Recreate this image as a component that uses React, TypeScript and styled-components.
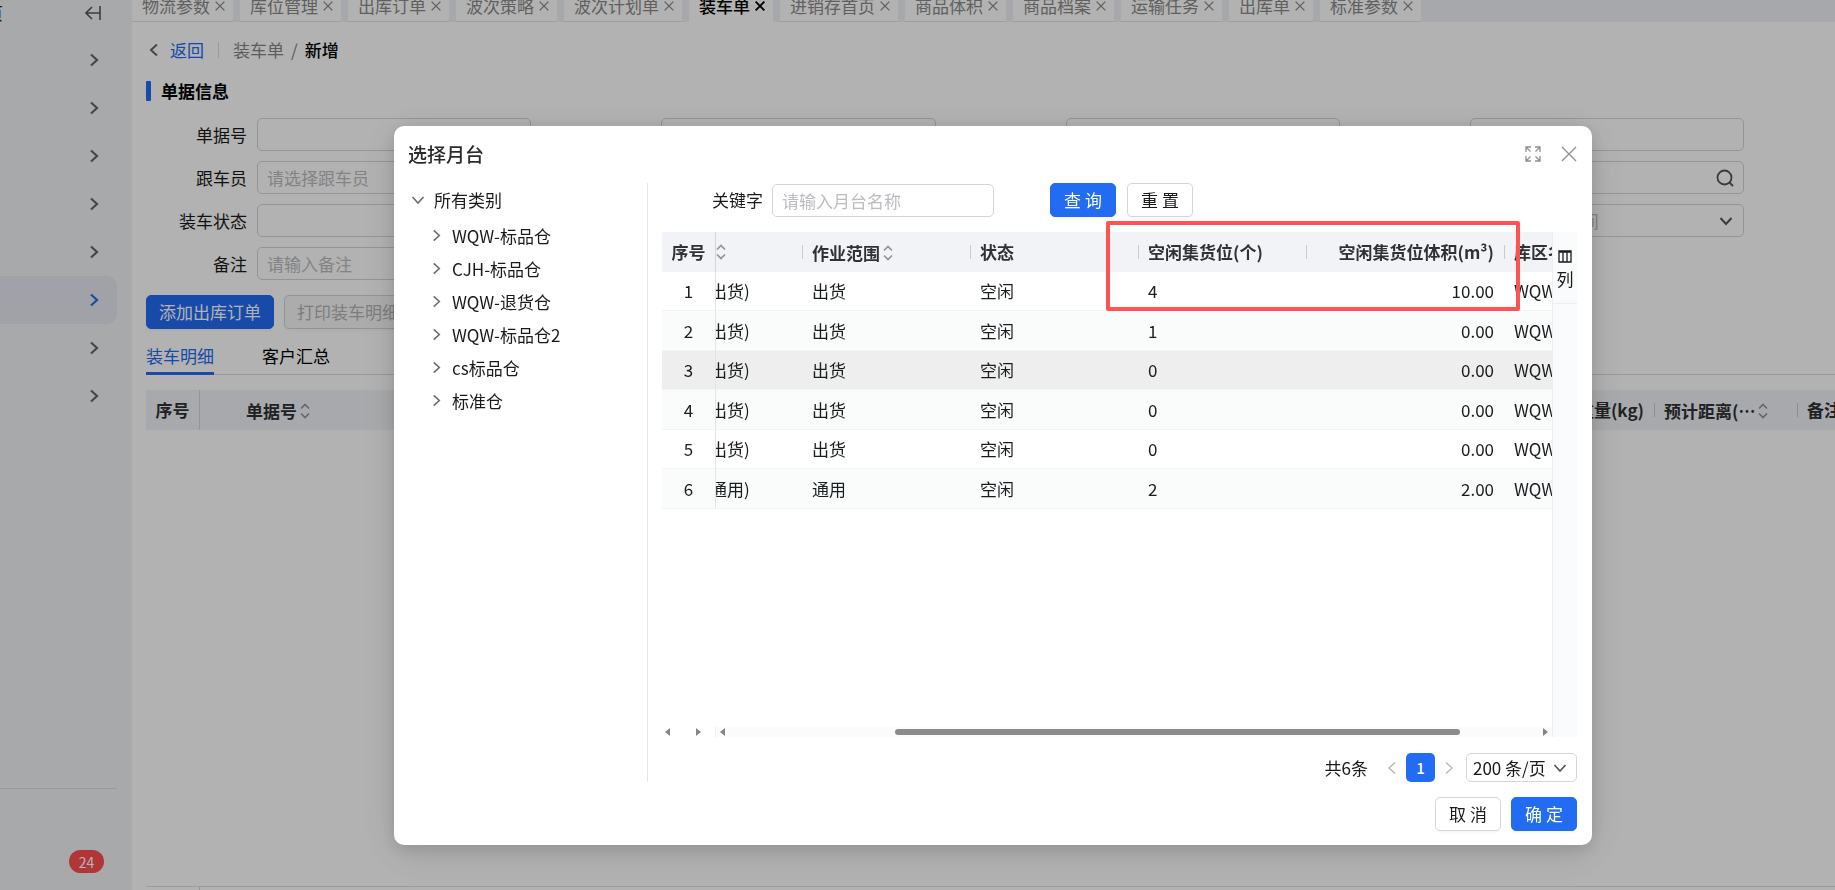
import React from "react";
import styled, { createGlobalStyle, css } from "styled-components";

const blue = "#226bf3";

const GlobalStyle = createGlobalStyle`
  *, *::before, *::after { box-sizing: border-box; }
  body {
    margin: 0;
    overflow: hidden;
    background: #fff;
    color: #1a1a1a;
    font: 17px/24px "Noto Sans CJK SC", "Noto Sans", sans-serif;
  }
  button, input, select { font: inherit; color: inherit; margin: 0; }
  button { cursor: pointer; }
  ul { list-style: none; margin: 0; padding: 0; }
  h1, h2 { margin: 0; }
`;

/* ---------- icons ---------- */

type Dir = "left" | "right" | "down";
const chevronPaths: Record<Dir, string> = {
  right: "M5 2.5 11 8l-6 5.5",
  left: "M11 2.5 5 8l6 5.5",
  down: "M2.5 5 8 11l5.5-6",
};

const Icon = styled.svg`
  display: block;
  flex: none;
  fill: none;
  stroke: currentColor;
`;

const Chevron = ({ dir, size = 16, weight = 1.7 }: { dir: Dir; size?: number; weight?: number }) => (
  <Icon width={size} height={size} viewBox="0 0 16 16" strokeWidth={weight} aria-hidden>
    <path d={chevronPaths[dir]} />
  </Icon>
);

const SortIcon = styled(Icon)`
  color: #8f949b;
`;

const Sort = () => (
  <SortIcon width="10" height="16" viewBox="0 0 10 16" strokeWidth="1.7" aria-hidden>
    <path d="M1 5.5 5 1.5l4 4M1 10.5l4 4 4-4" />
  </SortIcon>
);

const Cross = ({ size, weight }: { size: number; weight: number }) => (
  <Icon width={size} height={size} viewBox="0 0 16 16" strokeWidth={weight} aria-hidden>
    <path d="M1 1l14 14M15 1 1 15" />
  </Icon>
);

/* ---------- page ---------- */

const Page = styled.div`
  display: flex;
  min-height: 100vh;
`;

const Sidebar = styled.aside`
  display: flex;
  flex-direction: column;
  flex: none;
  width: 132px;
  padding-right: 15px;
  background: #f0f2f5;
`;

const SidebarHead = styled.div`
  display: flex;
  justify-content: space-between;
  align-items: center;
  height: 36px;
  padding: 0 16px 10px 0;
`;

const SidebarTitle = styled.span`
  width: 3px;
  display: flex;
  justify-content: flex-end;
  overflow: hidden;
  white-space: nowrap;
`;

const IconButton = styled.button`
  display: flex;
  align-items: center;
  justify-content: center;
  padding: 0;
  border: 0;
  background: none;
  color: inherit;
`;

const MenuButton = styled(IconButton)<{ $active?: boolean }>`
  width: 100%;
  height: 48px;
  padding-right: 15px;
  justify-content: flex-end;
  border-radius: 0 10px 10px 0;
  color: ${(p) => (p.$active ? blue : "#62666b")};
  background: ${(p) => (p.$active ? "#e6e8f1" : "none")};
`;

const SidebarFoot = styled.div`
  display: flex;
  justify-content: flex-end;
  align-items: flex-start;
  height: 102px;
  margin-top: auto;
  padding: 61px 13px 0 0;
  border-top: 1px solid #d7dadd;
`;

const Badge = styled.span`
  width: 35px;
  height: 23px;
  border-radius: 12px;
  background: #ff4d4f;
  color: #fff;
  font-size: 14px;
  text-align: center;
`;

const Main = styled.main`
  display: flex;
  flex-direction: column;
  flex: 1;
  min-width: 0;
`;

const TabStrip = styled.nav`
  display: flex;
  align-items: flex-end;
  gap: 7px;
  height: 22px;
  overflow: hidden;
  background: #eef1f5;
`;

const PageTab = styled.div<{ $active?: boolean }>`
  display: flex;
  align-items: center;
  flex: none;
  gap: 5px;
  height: 32px;
  padding: 0 8px 0 10px;
  background: #fff;
  color: #8a8a8a;
  box-shadow: inset 0 -1px #dfe1e4;
  ${(p) =>
    p.$active &&
    css`
      color: #000;
      font-weight: 500;
      box-shadow: none;
    `}
`;

const Content = styled.div`
  display: flex;
  flex-direction: column;
  flex: 1;
  padding: 16px 0 0 14px;
`;

const Breadcrumb = styled.nav`
  display: flex;
  align-items: center;
  color: #858585;
`;

const BackLink = styled.a`
  display: flex;
  align-items: center;
  gap: 8px;
  padding-right: 14px;
  border-right: 1px solid #ddd;
  margin-right: 14px;
  line-height: 16px;
  color: ${blue};
  text-decoration: none;
  svg { color: #666; }
`;

const Slash = styled.span`
  margin: 0 7px;
`;

const Current = styled.span`
  color: #000;
  font-weight: 500;
`;

const SectionTitle = styled.h2`
  display: flex;
  align-items: center;
  gap: 10px;
  margin-top: 17px;
  font-size: 17px;
  line-height: 24px;
  font-weight: 700;
  color: #000;
  &::before {
    content: "";
    width: 5px;
    height: 20px;
    border-radius: 1px;
    background: ${blue};
  }
`;

const FormGrid = styled.form`
  display: grid;
  grid-template-columns: repeat(4, minmax(0, 1fr));
  gap: 10px 19px;
  margin: 15px 91px 0 0;
`;

const Field = styled.label`
  display: grid;
  grid-template-columns: 101px 1fr;
  gap: 10px;
  align-items: center;
`;

const FieldLabel = styled.span`
  text-align: right;
`;

const Control = styled.span`
  display: flex;
  align-items: center;
  height: 33px;
  padding: 0 9px;
  border: 1px solid #d3d5d8;
  border-radius: 5px;
  color: #555;
`;

const TextInput = styled.input`
  flex: 1;
  width: 100%;
  min-width: 0;
  height: 100%;
  padding: 0;
  border: 0;
  outline: 0;
  background: none;
  &::placeholder { color: #bbbcbf; opacity: 1; }
`;

const PlainSelect = styled.select`
  flex: 1;
  min-width: 0;
  height: 100%;
  padding: 0;
  border: 0;
  outline: 0;
  appearance: none;
  background: none;
  color: #bbbcbf;
`;

const Button = styled.button<{ $primary?: boolean }>`
  flex: none;
  min-width: 66px;
  height: 34px;
  padding: 0 12px;
  border: 1px solid ${(p) => (p.$primary ? blue : "#d3d5d8")};
  border-radius: 5px;
  background: ${(p) => (p.$primary ? blue : "#fff")};
  color: ${(p) => (p.$primary ? "#fff" : "#1a1a1a")};
  line-height: 24px;
  white-space: nowrap;
  box-shadow: 0 2px 2px rgba(0, 0, 0, 0.03);
  &:disabled { background: #f7f7f7; color: #b3b3b3; }
`;

const Actions = styled.div`
  display: flex;
  gap: 10px;
  margin-top: 15px;
`;

const DetailTabs = styled.div`
  display: flex;
  gap: 48px;
  margin-top: 16px;
  border-bottom: 1px solid #d8dadd;
`;

const DetailTab = styled.button<{ $active?: boolean }>`
  height: 30px;
  padding: 0 0 6px;
  margin-bottom: -1px;
  border: 0;
  border-bottom: 3px solid ${(p) => (p.$active ? blue : "transparent")};
  background: none;
  color: ${(p) => (p.$active ? blue : "#000")};
  line-height: 22px;
`;

const Table = styled.table`
  width: 100%;
  table-layout: fixed;
  border-collapse: separate;
  border-spacing: 0;
`;

const HeadCell = styled.th<{ $align?: string; $divider?: boolean; $pinned?: boolean; $cut?: boolean }>`
  height: 40px;
  padding: 0 ${(p) => (p.$pinned || p.$cut ? 0 : 10)}px;
  overflow: hidden;
  white-space: nowrap;
  text-align: ${(p) => p.$align || "left"};
  font-weight: 700;
  color: #303133;
  background: #f1f3f6;
  ${(p) => p.$pinned && "border-right: 1px solid #d3d6dc;"}
  ${(p) =>
    p.$divider &&
    css`
      background: linear-gradient(#c6cad4, #c6cad4) left center / 1px 14px no-repeat #f1f3f6;
    `}
`;

const HeadLabel = styled.span`
  display: inline-flex;
  align-items: center;
  gap: 3px;
  vertical-align: middle;
`;

const OrderTable = styled(Table)`
  margin-top: 15px;
`;

const OrderHeadCell = styled(HeadCell)<{ $indent?: boolean }>`
  ${(p) => p.$indent && "padding-left: 46px;"}
`;

const Summary = styled.div`
  height: 4px;
  margin-top: auto;
  border-top: 1px solid #dcdee0;
  &::before {
    content: "";
    display: block;
    width: 54px;
    height: 3px;
    border-right: 1px solid #d3d6dc;
  }
`;

/* ---------- dialog ---------- */

const Mask = styled.div`
  position: fixed;
  inset: 0;
  display: flex;
  justify-content: center;
  align-items: flex-start;
  padding: 126px 0 0 151px;
  background: rgba(0, 0, 0, 0.3);
`;

const Dialog = styled.section`
  width: min(1198px, 100%);
  padding: 14px 15px 14px 14px;
  border-radius: 10px;
  background: #fff;
  box-shadow: 0 8px 40px rgba(0, 0, 0, 0.12), 0 4px 16px rgba(0, 0, 0, 0.12);
`;

const DialogHead = styled.header`
  display: flex;
  align-items: center;
  gap: 20px;
  height: 28px;
`;

const DialogTitle = styled.h1`
  flex: 1;
  font-size: 19px;
  line-height: 28px;
  font-weight: 500;
  color: #2b2b2b;
`;

const HeadButton = styled(IconButton)`
  width: 16px;
  height: 16px;
  color: #8f8f8f;
`;

const DialogBody = styled.div`
  display: flex;
  margin-top: 15px;
`;

const Tree = styled.ul`
  flex: none;
  width: 240px;
  padding-left: 2px;
  border-right: 1px solid #e4e5e7;
`;

const TreeBranch = styled.ul`
  margin: 3px 0 0 19px;
`;

const TreeNode = styled.button`
  display: flex;
  align-items: center;
  gap: 8px;
  height: 33px;
  padding: 0;
  border: 0;
  background: none;
  color: #1a1a1a;
  svg { color: #6d6d6d; }
`;

const Panel = styled.div`
  flex: 1;
  min-width: 0;
  padding-left: 14px;
`;

const SearchBar = styled.form`
  display: flex;
  align-items: center;
  gap: 11px;
  padding-left: 50px;
`;

const KeywordField = styled.label`
  display: flex;
  align-items: center;
  gap: 9px;
  margin-right: 45px;
`;

const KeywordControl = styled(Control)`
  width: 222px;
`;

const GridArea = styled.div`
  position: relative;
  display: flex;
  margin-top: 15px;
`;

const GridMain = styled.div`
  display: flex;
  flex-direction: column;
  flex: 1;
  min-width: 0;
  min-height: 505px;
`;

const BodyRow = styled.tr<{ $hover?: boolean }>`
  height: 39px;
  background: ${(p) => (p.$hover ? "#eee" : "#fff")};
  &:nth-child(even) {
    height: 40px;
    background: #fafcfb;
  }
`;

const Cell = styled.td<{ $align?: string; $pinned?: boolean; $cut?: boolean }>`
  padding: 0 ${(p) => (p.$pinned || p.$cut ? 0 : 10)}px;
  overflow: hidden;
  white-space: nowrap;
  text-align: ${(p) => p.$align || "left"};
  color: #181d1f;
  border-bottom: 1px solid #f3f4f4;
  ${(p) => p.$pinned && "border-right: 1px solid #e2e3e5;"}
  ${(p) => p.$cut && "text-indent: -6px;"}
`;

const ScrollRow = styled.div`
  display: flex;
  height: 10px;
  margin-top: auto;
  color: #858585;
`;

const PinnedScroll = styled.div`
  display: flex;
  align-items: center;
  justify-content: space-between;
  width: 54px;
  padding: 0 14px 0 3px;
  border-right: 1px solid #eee;
`;

const Track = styled.div`
  display: grid;
  grid-template-columns: 8px 169fr 563fr 80fr 8px;
  align-items: center;
  flex: 1;
  padding: 0 4px 0 1px;
  background: #fbfbfb;
`;

const Thumb = styled.span`
  grid-column: 3;
  height: 6px;
  border-radius: 3px;
  background: #8b8b8b;
`;

const Triangle = styled.i<{ $right?: boolean }>`
  justify-self: end;
  width: 0;
  height: 0;
  border: 4px solid transparent;
  ${(p) =>
    p.$right
      ? "border-left: 5px solid #858585; border-right: 0; grid-column: 5;"
      : "border-right: 5px solid #858585; border-left: 0;"}
`;

const SidePanel = styled.div`
  flex: none;
  width: 25px;
  background: #fafbfd;
  border-left: 1px solid #eceef0;
`;

const ColumnsButton = styled(IconButton)`
  flex-direction: column;
  gap: 4px;
  width: 100%;
  height: 72px;
  padding-top: 5px;
  border-bottom: 1px solid #eceef0;
`;

const Highlight = styled.div`
  position: absolute;
  top: -11px;
  left: 444px;
  width: 414px;
  height: 90px;
  border: 4px solid #ff5252;
  border-radius: 2px;
  pointer-events: none;
`;

const Pager = styled.div`
  display: flex;
  align-items: center;
  justify-content: flex-end;
  margin-top: 16px;
`;

const PageArrow = styled(IconButton)`
  width: 14px;
  margin: 0 7px;
  color: #b5b5b5;
`;

const PageNumber = styled(IconButton)`
  width: 29px;
  height: 29px;
  border-radius: 5px;
  background: ${blue};
  color: #fff;
  font-size: 15px;
  font-weight: 500;
`;

const Total = styled.span`
  margin-right: 10px;
`;

const SizeControl = styled(Control)`
  width: 111px;
  height: 29px;
  margin-left: 3px;
  padding: 0 8px 0 6px;
`;

const SizeSelect = styled(PlainSelect)`
  color: #1a1a1a;
`;

const DialogFoot = styled.footer`
  display: flex;
  justify-content: flex-end;
  gap: 10px;
  margin-top: 15px;
`;

/* ---------- data ---------- */

const pageTabs = ["物流参数", "库位管理", "出库订单", "波次策略", "波次计划单", "装车单", "进销存首页", "商品体积", "商品档案", "运输任务", "出库单", "标准参数"];
const warehouses = ["WQW-标品仓", "CJH-标品仓", "WQW-退货仓", "WQW-标品仓2", "cs标品仓", "标准仓"];
const docks = [
  { scope: "出货", slots: 4, volume: "10.00" },
  { scope: "出货", slots: 1, volume: "0.00" },
  { scope: "出货", slots: 0, volume: "0.00" },
  { scope: "出货", slots: 0, volume: "0.00" },
  { scope: "出货", slots: 0, volume: "0.00" },
  { scope: "通用", slots: 2, volume: "2.00" },
];

const FormField = ({ label, placeholder, kind }: { label?: string; placeholder?: string; kind?: "search" | "select" }) => (
  <Field>
    <FieldLabel>{label}</FieldLabel>
    <Control>
      {kind === "select" ? (
        <PlainSelect aria-label={placeholder}>
          <option>{placeholder}</option>
        </PlainSelect>
      ) : (
        <TextInput placeholder={placeholder} aria-label={label} />
      )}
      {kind === "select" && <Chevron dir="down" weight={2} />}
      {kind === "search" && (
        <Icon width="18" height="18" viewBox="0 0 18 18" strokeWidth="1.8" aria-hidden>
          <circle cx="8.5" cy="8.5" r="7" />
          <path d="m13.5 13.5 3.5 3.5" />
        </Icon>
      )}
    </Control>
  </Field>
);

const DockDialog = () => (
  <Dialog role="dialog" aria-modal="true" aria-labelledby="dock-title">
    <DialogHead>
      <DialogTitle id="dock-title">选择月台</DialogTitle>
      <HeadButton aria-label="全屏">
        <Icon width="16" height="16" viewBox="0 0 16 16" strokeWidth="1.3" aria-hidden>
          <path d="M1 6V1h5M1 1l4.5 4.5M10 1h5v5M15 1l-4.5 4.5M15 10v5h-5M15 15l-4.5-4.5M6 15H1v-5M1 15l4.5-4.5" />
        </Icon>
      </HeadButton>
      <HeadButton aria-label="关闭">
        <Cross size={16} weight={1.3} />
      </HeadButton>
    </DialogHead>
    <DialogBody>
      <Tree>
        <li>
          <TreeNode>
            <Chevron dir="down" />
            所有类别
          </TreeNode>
          <TreeBranch>
            {warehouses.map((name) => (
              <li key={name}>
                <TreeNode>
                  <Chevron dir="right" size={15} />
                  {name}
                </TreeNode>
              </li>
            ))}
          </TreeBranch>
        </li>
      </Tree>
      <Panel>
        <SearchBar onSubmit={(e) => e.preventDefault()}>
          <KeywordField>
            关键字
            <KeywordControl>
              <TextInput placeholder="请输入月台名称" />
            </KeywordControl>
          </KeywordField>
          <Button $primary>查 询</Button>
          <Button type="reset">重 置</Button>
        </SearchBar>
        <GridArea>
          <GridMain>
            <Table>
              <colgroup>
                {[54, 86, 168, 168, 168, 198].map((w, i) => (
                  <col key={i} width={w} />
                ))}
                <col />
              </colgroup>
              <thead>
                <tr>
                  <HeadCell $pinned $align="center">序号</HeadCell>
                  <HeadCell $cut><Sort /></HeadCell>
                  <HeadCell $divider><HeadLabel>作业范围<Sort /></HeadLabel></HeadCell>
                  <HeadCell $divider>状态</HeadCell>
                  <HeadCell $divider>空闲集货位(个)</HeadCell>
                  <HeadCell $divider $align="right">空闲集货位体积(m³)</HeadCell>
                  <HeadCell $divider>库区名称</HeadCell>
                </tr>
              </thead>
              <tbody>
                {docks.map((d, i) => (
                  <BodyRow key={i} $hover={i === 2}>
                    <Cell $pinned $align="center">{i + 1}</Cell>
                    <Cell $cut>{d.scope})</Cell>
                    <Cell>{d.scope}</Cell>
                    <Cell>空闲</Cell>
                    <Cell>{d.slots}</Cell>
                    <Cell $align="right">{d.volume}</Cell>
                    <Cell>WQW-标品仓</Cell>
                  </BodyRow>
                ))}
              </tbody>
            </Table>
            <ScrollRow aria-hidden>
              <PinnedScroll>
                <Triangle />
                <Triangle $right />
              </PinnedScroll>
              <Track>
                <Triangle />
                <Thumb />
                <Triangle $right />
              </Track>
            </ScrollRow>
          </GridMain>
          <SidePanel>
            <ColumnsButton>
              <Icon width="14" height="13" viewBox="0 0 14 13" strokeWidth="1.3" aria-hidden>
                <path d="M1 2h12M1 1h12v11H1zM5 2v10M9 2v10" />
              </Icon>
              列
            </ColumnsButton>
          </SidePanel>
          <Highlight />
        </GridArea>
        <Pager>
          <Total>共6条</Total>
          <PageArrow aria-label="上一页"><Chevron dir="left" weight={1.3} /></PageArrow>
          <PageNumber>1</PageNumber>
          <PageArrow aria-label="下一页"><Chevron dir="right" weight={1.3} /></PageArrow>
          <SizeControl>
            <SizeSelect aria-label="每页条数">
              <option>200 条/页</option>
            </SizeSelect>
            <Chevron dir="down" />
          </SizeControl>
        </Pager>
      </Panel>
    </DialogBody>
    <DialogFoot>
      <Button>取 消</Button>
      <Button $primary>确 定</Button>
    </DialogFoot>
  </Dialog>
);

export default function App() {
  return (
    <>
      <GlobalStyle />
      <Page lang="zh-CN">
        <Sidebar>
          <SidebarHead>
            <SidebarTitle>首页</SidebarTitle>
            <IconButton aria-label="收起菜单">
              <Icon width="16" height="14" viewBox="0 0 16 14" strokeWidth="1.6" color="#555a60" aria-hidden>
                <path d="M15 0v14M1 7h14M7 1 1 7l6 6" />
              </Icon>
            </IconButton>
          </SidebarHead>
          <nav>
            {Array.from({ length: 8 }, (_, i) => (
              <MenuButton key={i} $active={i === 5} aria-label={`菜单 ${i + 1}`}>
                <Chevron dir="right" weight={2.2} />
              </MenuButton>
            ))}
          </nav>
          <SidebarFoot>
            <Badge>24</Badge>
          </SidebarFoot>
        </Sidebar>
        <Main>
          <TabStrip>
            {pageTabs.map((name) => (
              <PageTab key={name} $active={name === "装车单"}>
                {name}
                <IconButton aria-label={`关闭${name}`}>
                  <Cross size={10} weight={name === "装车单" ? 3 : 2.2} />
                </IconButton>
              </PageTab>
            ))}
          </TabStrip>
          <Content>
            <Breadcrumb>
              <BackLink href="#">
                <Chevron dir="left" weight={2} />
                返回
              </BackLink>
              装车单<Slash>/</Slash>
              <Current>新增</Current>
            </Breadcrumb>
            <SectionTitle>单据信息</SectionTitle>
            <FormGrid>
              <FormField label="单据号" />
              <FormField />
              <FormField />
              <FormField />
              <FormField label="跟车员" placeholder="请选择跟车员" />
              <FormField />
              <FormField />
              <FormField kind="search" />
              <FormField label="装车状态" />
              <FormField />
              <FormField />
              <FormField kind="select" placeholder="请选择装车时间" />
              <FormField label="备注" placeholder="请输入备注" />
            </FormGrid>
            <Actions>
              <Button $primary>添加出库订单</Button>
              <Button disabled>打印装车明细</Button>
            </Actions>
            <DetailTabs>
              <DetailTab $active>装车明细</DetailTab>
              <DetailTab>客户汇总</DetailTab>
            </DetailTabs>
            <OrderTable>
              <colgroup>
                <col width="54" />
                <col />
                <col />
                <col width="143" />
                <col width="38" />
              </colgroup>
              <thead>
                <tr>
                  <OrderHeadCell $pinned $align="center">序号</OrderHeadCell>
                  <OrderHeadCell $indent><HeadLabel>单据号<Sort /></HeadLabel></OrderHeadCell>
                  <OrderHeadCell $align="right">重量(kg)</OrderHeadCell>
                  <OrderHeadCell $divider><HeadLabel>预计距离(…<Sort /></HeadLabel></OrderHeadCell>
                  <OrderHeadCell $divider>备注</OrderHeadCell>
                </tr>
              </thead>
            </OrderTable>
            <Summary />
          </Content>
        </Main>
      </Page>
      <Mask>
        <DockDialog />
      </Mask>
    </>
  );
}
